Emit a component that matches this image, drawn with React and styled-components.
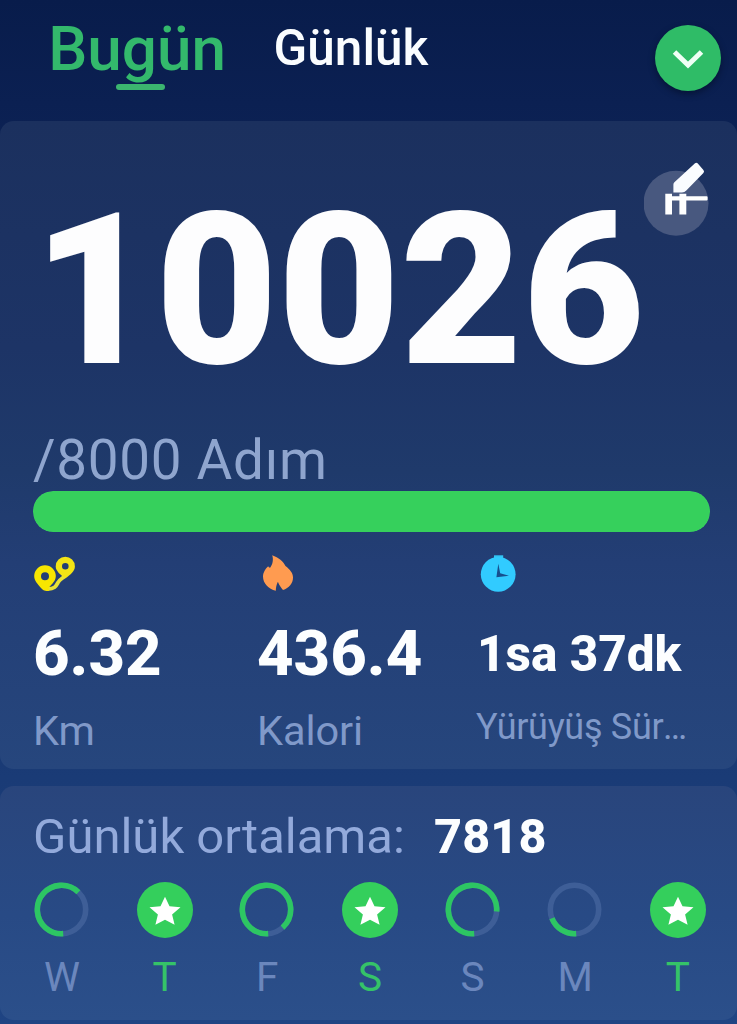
import React, { useState } from 'react';
import styled, { createGlobalStyle } from 'styled-components';

const GlobalStyle = createGlobalStyle`
  * {
    box-sizing: border-box;
  }
  body {
    margin: 0;
    background: #081c4c;
    font-family: Roboto, "Liberation Sans", sans-serif;
  }
`;

const Screen = styled.div`
  width: 737px;
  height: 1024px;
  overflow: hidden;
  display: flex;
  flex-direction: column;
  background: linear-gradient(to bottom, #081c4b 0%, #0b2052 10%, #1a3b76 76%, #1f4483 100%);
`;

const Header = styled.header`
  height: 121px;
  flex-shrink: 0;
  display: flex;
  align-items: flex-start;
  padding: 18px 16px 0 49px;
`;

const Tab = styled.div`
  display: flex;
  flex-direction: column;
  align-items: center;
  width: ${({ $width }) => $width}px;
  padding-top: ${({ $active }) => ($active ? 0 : 6)}px;
  margin-right: 48px;
  font-weight: 500;
  font-size: ${({ $active }) => ($active ? 62 : 49.5)}px;
  line-height: ${({ $active }) => ($active ? 62 : 49)}px;
  color: ${({ $active }) => ($active ? '#33b96c' : '#fafdff')};
  white-space: nowrap;
  cursor: pointer;
`;

const TabLine = styled.span`
  width: 49px;
  height: 6px;
  margin-top: 4px;
  margin-left: 7px;
  border-radius: 3px;
  background: #3bb56f;
`;

const RoundButton = styled.button`
  width: 66px;
  height: 66px;
  margin: 7px 0 0 auto;
  padding: 0;
  border: 0;
  border-radius: 50%;
  display: flex;
  align-items: center;
  justify-content: center;
  background: #2fbc67;
  box-shadow: 0 3px 6px rgba(0, 10, 30, 0.5);
`;

const Card = styled.section`
  position: relative;
  flex-shrink: 0;
  border-radius: 14px;
`;

const StepsCard = styled(Card)`
  height: 648px;
  padding: 63px 27px 0 33px;
  background: linear-gradient(to bottom, #1b305e 0%, #1d3466 35%, #1f3a6b 54%, #233e75 68%, #26467d 100%);
`;

const WeekCard = styled(Card)`
  height: 234px;
  margin-top: 17px;
  padding: 25px 31px 0 34px;
  background: linear-gradient(to bottom, #29457c 0%, #284a85 55%, #2b4f8a 100%);
`;

// floats over the top right corner of the card
const EditButton = styled.button`
  position: absolute;
  top: 39px;
  right: 27px;
  width: 66px;
  height: 78px;
  padding: 0;
  border: 0;
  background: none;
`;

const StepCount = styled.div`
  font-weight: 900;
  font-size: 211px;
  line-height: 214px;
  letter-spacing: 0.1px;
  color: #fdfdfe;
`;

const Goal = styled.div`
  height: 46px;
  margin-top: 35px;
  font-size: 54.8px;
  line-height: 54px;
  letter-spacing: 0.7px;
  color: #8fa5ce;
  white-space: nowrap;
`;

const Track = styled.div`
  height: 41px;
  margin-top: 12px;
  border-radius: 20px;
  background: #314a7c;
  overflow: hidden;
`;

const Fill = styled.div`
  height: 100%;
  border-radius: 20px;
  background: #36d05c;
`;

const Stats = styled.div`
  display: grid;
  grid-template-columns: 224px 219px 1fr;
  margin-top: 22px;
`;

const Stat = styled.div`
  min-width: 0;
`;

const StatIcon = styled.div`
  height: 40px;
  margin-bottom: 28px;
  padding-left: ${({ $inset }) => $inset}px;
  svg {
    display: block;
  }
`;

const StatValue = styled.div`
  font-weight: 800;
  font-size: ${({ $small }) => ($small ? 49.5 : 63.5)}px;
  line-height: 64px;
  padding-left: ${({ $small }) => ($small ? 1 : 0)}px;
  color: #fcfeff;
  white-space: nowrap;
`;

const StatLabel = styled.div`
  width: 214px;
  margin-top: ${({ $small }) => ($small ? 17 : 20)}px;
  overflow: hidden;
  text-overflow: ellipsis;
  font-size: ${({ $small }) => ($small ? 36 : 41.5)}px;
  line-height: 49px;
  letter-spacing: ${({ $small }) => ($small ? -0.3 : -0.1)}px;
  color: #8099c9;
  white-space: nowrap;
`;

const Average = styled.div`
  display: flex;
  font-size: 49px;
  line-height: 51px;
  color: #93aadb;
  white-space: nowrap;
`;

const AverageLabel = styled.span`
  width: 401px;
  margin-left: -1px;
`;

const AverageValue = styled.strong`
  font-weight: 800;
  font-size: 48.5px;
  letter-spacing: 0.2px;
  color: #fcfeff;
`;

const Week = styled.div`
  display: flex;
  justify-content: space-between;
  margin-top: 20px;
`;

const Day = styled.div`
  width: 56px;
  display: flex;
  flex-direction: column;
  align-items: center;
  font-size: 40.5px;
  line-height: 40px;
  color: ${({ $done }) => ($done ? '#35c368' : '#6b87bd')};
  svg {
    display: block;
    margin-bottom: 18px;
  }
`;

const RADIUS = 24.2;
const LENGTH = 2 * Math.PI * RADIUS;

// Ring starts at the bottom and runs clockwise
const DayRing = ({ value }) => (
  <svg width="56" height="57" viewBox="0 0 56 57" fill="none" strokeWidth="5.6">
    <circle cx="27.500" cy="27.500" r={RADIUS} stroke="#3e5e97" />
    <circle
      cx="27.500"
      cy="27.500"
      r={RADIUS}
      stroke="#2dc663"
      strokeDasharray={`${LENGTH * value} ${LENGTH}`}
      transform="rotate(86 27.5 27.5)"
    />
  </svg>
);

const DayStar = () => (
  <svg width="56" height="57" viewBox="0 0 56 57">
    <circle cx="28" cy="28" r="28" fill="#34cf5c" />
    <path
      d="M28 14.800l4.500 9.500 11 .9-8.400 7.400 2.500 10.200-9.600-5.100-9.600 5.100 2.500-10.200-8.400-7.400 11-.9z"
      fill="#fff"
    />
  </svg>
);

const RouteIcon = () => (
  <svg width="43" height="40" viewBox="0 0 43 40">
    <path d="M14.500 35c8-.5 8.500-3 10.500-6.500 1.500-3 4-4 6.500-6" fill="none" stroke="#e9e335" strokeWidth="3.800" strokeLinecap="round" />
    <path
      fillRule="evenodd"
      d="M12 11.300a10.800 10.800 0 0 1 10.800 10.800c0 5-3.800 8-7.300 11.900l.5 2.800c-3.500.8-6-.4-8-2.800-3.500-4.200-6.800-7.200-6.800-11.900A10.800 10.800 0 0 1 12 11.300zm0 6.900a4 4 0 1 0 0 8 4 4 0 0 0 0-8z"
      fill="#f7e600"
    />
    <path
      fillRule="evenodd"
      d="M32.300 2.800a9.600 9.600 0 0 1 9.600 9.600c0 4.500-4.400 8.300-9.400 11.800-4.900-3.200-9.800-7.300-9.800-11.800a9.600 9.600 0 0 1 9.600-9.600zm0 6.100a3.300 3.300 0 1 0 0 6.600 3.300 3.300 0 0 0 0-6.600z"
      fill="#f3e415"
    />
  </svg>
);

const FlameIcon = () => (
  <svg width="32" height="40" viewBox="0 0 32 40">
    <path
      d="M10.200 1.200c6.300 2.300 11.300 6.300 13.300 10.800 4.500 3.700 7.500 7 7.500 11.500 0 6-4 10.500-10 12.600-1.900-2.200-3.900-5.100-5.100-8.400-1.500 3-2 6-2.100 9C6.500 35 1 29.500 1 22.500c0-4 2.500-8 5.200-10.300.3.900.9 1.400 1.900 1.500C11 10 11.500 5 10.200 1.200z"
      fill="#ff9b50"
    />
  </svg>
);

const ClockIcon = () => (
  <svg width="37" height="40" viewBox="0 0 37 40">
    <path d="M14 1.300h9.200v5H14z" fill="#32c5f5" />
    <circle cx="18.200" cy="20.300" r="17.400" fill="#31cbff" />
    <path d="M18.300 9.700l1.900 9.600 8.800 2.400-12.600 1.600z" fill="#174f8e" />
  </svg>
);

const EditIcon = () => (
  <svg width="66" height="78" viewBox="0 0 66 78">
    <circle cx="32" cy="43.300" r="32.500" fill="#48587f" />
    <path
      d="M51 3.300q1.300-1.200 2.600 0l5.800 6.800q1.300 1.500 0 2.800L42.300 30.500q-1.800 1.900-4.300 1.900h-8.600v-7.900q0-1.300 1-2.300z"
      fill="#fafcff"
    />
    <path d="M21.300 33.800H28v2.400h7.400v-2.400h6.900v2.400h20.300q1 0 1 1v2.200q0 1-1 1H42.300v14.100h-6.900V40.400H28v14.100h-6.700z" fill="#fff" />
  </svg>
);

const stats = [
  { value: '6.32', label: 'Km', icon: <RouteIcon />, inset: 0 },
  { value: '436.4', label: 'Kalori', icon: <FlameIcon />, inset: 5 },
  { value: '1sa 37dk', label: 'Yürüyüş Süresi', icon: <ClockIcon />, inset: 4, small: true },
];

const week = [
  { day: 'W', value: 0.63 },
  { day: 'T', value: 1 },
  { day: 'F', value: 0.89 },
  { day: 'S', value: 1 },
  { day: 'S', value: 0.77 },
  { day: 'M', value: 0.2 },
  { day: 'T', value: 1 },
];

const App = () => {
  const [tab, setTab] = useState('today');
  const steps = 10026;
  const goal = 8000;

  return (
    <>
      <GlobalStyle />
      <Screen>
        <Header>
          <Tab $active={tab === 'today'} $width={176} onClick={() => setTab('today')}>
            Bugün
            {tab === 'today' && <TabLine />}
          </Tab>
          <Tab $active={tab === 'daily'} $width={156} onClick={() => setTab('daily')}>
            Günlük
            {tab === 'daily' && <TabLine />}
          </Tab>
          <RoundButton aria-label="Menü">
            <svg width="34" height="24" viewBox="0 0 34 24">
              <path d="M3.500 6l13.500 13L30.500 6" fill="none" stroke="#effff5" strokeWidth="5" />
            </svg>
          </RoundButton>
        </Header>

        <StepsCard>
          <EditButton aria-label="Düzenle">
            <EditIcon />
          </EditButton>
          <StepCount>{steps}</StepCount>
          <Goal>{`/${goal} Adım`}</Goal>
          <Track>
            <Fill style={{ width: `${Math.min(100, (steps / goal) * 100)}%` }} />
          </Track>
          <Stats>
            {stats.map((item) => (
              <Stat key={item.label}>
                <StatIcon $inset={item.inset}>{item.icon}</StatIcon>
                <StatValue $small={item.small}>{item.value}</StatValue>
                <StatLabel $small={item.small}>{item.label}</StatLabel>
              </Stat>
            ))}
          </Stats>
        </StepsCard>

        <WeekCard>
          <Average>
            <AverageLabel>Günlük ortalama:</AverageLabel>
            <AverageValue>7818</AverageValue>
          </Average>
          <Week>
            {week.map((item, index) => (
              <Day key={index} $done={item.value >= 1}>
                {item.value >= 1 ? <DayStar /> : <DayRing value={item.value} />}
                {item.day}
              </Day>
            ))}
          </Week>
        </WeekCard>
      </Screen>
    </>
  );
};

export default App;
